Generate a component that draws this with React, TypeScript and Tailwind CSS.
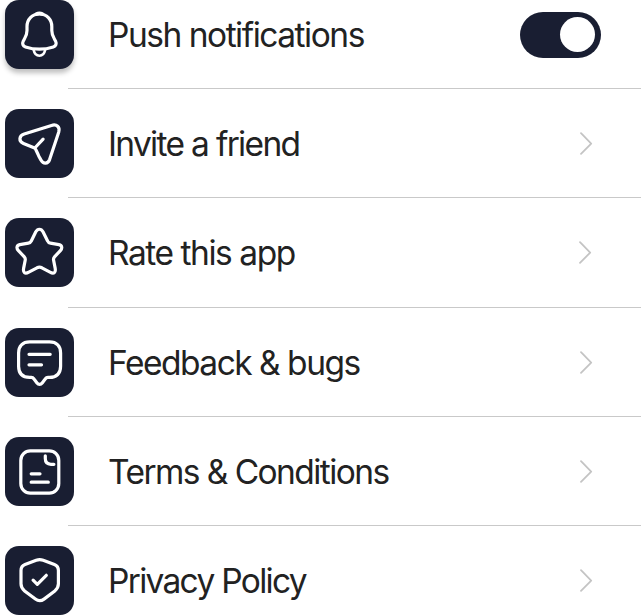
import type { ReactNode } from "react";

type Row = { label: string; icon: ReactNode; spacing: string; chevron: string; text: string };

const bell = (
  <>
    <path d="M34.4 14C27 14 22 19.5 22 26.5V30.5C22 34.5 21.2 36.2 19.4 39L18.2 41.2C17 43.8 17.8 46 20.5 46.9C29.5 49.9 39.3 49.9 48.3 46.9C51 46 51.8 43.8 50.6 41.2L49.4 39C47.6 36.2 46.8 34.5 46.8 30.5V26.5C46.8 19.5 41.8 14 34.4 14Z" />
    <path d="M31.2 14.1C33.2 13.2 35.6 13.2 37.6 14.1" strokeWidth="3.6" />
    <path d="M28.7 50.1C29.4 53.8 31.5 55.8 34.4 55.8S39.4 53.8 40.1 50.1" strokeWidth="2.6" />
  </>
);

const plane = (
  <path d="M19.2 25.1L46.5 16.4C51.7 14.8 55.3 18 53.7 23.3L44.6 50.6C42.9 55.2 38.2 55.2 36.1 51.3C34.9 49 33.8 47.6 33.1 45.5L31.1 41.3C30.8 40.1 30.1 39.2 29 38.8L18.5 34.4C13.4 32.2 13.8 26.9 19.2 25.1ZM29.8 39L38.1 30.2" />
);

const star = (
  <path d="M38 13.8L42.6 23Q43.3 24.8 45.4 25.1L54 26.6C57.2 27.3 57.5 30.3 55.4 32.6L49.5 38.8Q48.2 40.2 48.6 42.2L50.2 50.4C50.9 54.8 48.8 56.4 45 54.2L36.9 49.8Q34.5 48.6 32 49.8L23.8 54.2C20 56.4 17.9 54.8 18.6 50.4L20.2 42.2Q20.6 40.2 19.3 38.8L13.4 32.6C11.2 30.3 11.5 27.3 14.8 26.6L23.4 25.1Q25.4 24.8 26.3 23L30.8 13.8C32.7 10.4 36.2 10.4 38 13.8Z" />
);

const chat = (
  <>
    <path d="M24.7 13.9H44.5C51.6 13.9 55.6 17.9 55.6 25V38.3C55.6 45.4 51.6 49.4 44.5 49.4H43C41.8 49.4 40.9 50 40.2 51L37.2 55C35.8 56.8 33.4 56.8 32 55L29 51C28.3 50 27.6 49.4 26.3 49.4H24.7C17.5 49.4 13.6 45.9 13.6 38.3V25C13.6 17.9 17.6 13.9 24.7 13.9Z" />
    <path d="M24 26.3H45.2M24 36.8H36.5" />
  </>
);

const doc = (
  <>
    <rect x="15.8" y="13.9" width="38" height="42.2" rx="9.5" />
    <path d="M40.3 18.8V21.6C40.3 25.4 42.2 27.3 46 27.3H48.9M26.2 36.8H35M26.2 45.2H43.3" />
  </>
);

const shield = (
  <>
    <path d="M31.2 14.3L20 18.5C17.4 19.5 16 21.6 16 24.5V37.8C16 40.7 17.2 43 19.6 44.9L30.4 53.1C33 55 36.4 55 39 53.1L49.8 44.9C52.2 43 53.4 40.7 53.4 37.8V24.5C53.4 21.6 52 19.5 49.4 18.5L38.2 14.3C35.9 13.4 33.5 13.4 31.2 14.3Z" />
    <path d="M28.1 34.1L32.3 38.3L41.3 29.3" />
  </>
);

const rows: Row[] = [
  { label: "Push notifications", icon: bell, spacing: "h-[89px]", chevron: "", text: "pt-px tracking-[-1.48px]" },
  { label: "Invite a friend", icon: plane, spacing: "h-[109px] pt-5", chevron: "mr-[48px]", text: "pt-px tracking-[-1.68px]" },
  { label: "Rate this app", icon: star, spacing: "h-[110px] pt-[20.4px]", chevron: "mr-[49px]", text: "pt-px tracking-[-1.45px]" },
  { label: "Feedback & bugs", icon: chat, spacing: "h-[109px] pt-5", chevron: "mr-[48px]", text: "pt-px tracking-[-1.5px]" },
  { label: "Terms & Conditions", icon: doc, spacing: "h-[109px] pt-5", chevron: "mr-[48px]", text: "pt-px tracking-[-1.56px]" },
  { label: "Privacy Policy", icon: shield, spacing: "h-[89px] pt-5", chevron: "mr-[48px]", text: "pt-px tracking-[-1.7px]" },
];

export default function App() {
  return (
    <ul className="h-[615px] w-[641px] overflow-hidden bg-white font-['Inter','Liberation_Sans',sans-serif] text-[#222]">
      {rows.map((row, i) => (
        <li key={row.label} className={`flex pl-[5px] ${row.spacing}`}>
          <span
            className={`z-10 size-[69px] shrink-0 rounded-[14px] bg-[#191e32] ${i === 0 ? "shadow-[0_4px_5px_rgba(0,0,0,0.25)]" : ""}`}
          >
            <svg viewBox="0 0 69 69" className="size-full" fill="none" stroke="white" strokeWidth="3.2" strokeLinecap="round" strokeLinejoin="round">
              {row.icon}
            </svg>
          </span>
          <div className={`-ml-[6px] flex flex-1 items-start self-stretch pl-[40px] ${i < 5 ? "border-b border-[#c9c9c9]" : ""}`}>
            <div className="flex h-[69px] flex-1 items-center justify-between">
              <span className={`whitespace-nowrap text-[33.5px] leading-10 ${row.text}`}>{row.label}</span>
              {i === 0 ? (
                <button role="switch" aria-checked="true" aria-label={row.label} className="mr-[40px] flex h-[46px] w-[81px] items-center justify-end rounded-full bg-[#191e32] pr-[6px]">
                  <span className="size-[35px] rounded-full bg-white" />
                </button>
              ) : (
                <svg viewBox="0 0 14 24" className={`h-6 w-3.5 ${row.chevron}`} fill="none" stroke="#c4c4c4" strokeWidth="1.8" strokeLinecap="round" strokeLinejoin="round">
                  <path d="M2 1.2L12.2 11.6L2 21.8" />
                </svg>
              )}
            </div>
          </div>
        </li>
      ))}
    </ul>
  );
}
